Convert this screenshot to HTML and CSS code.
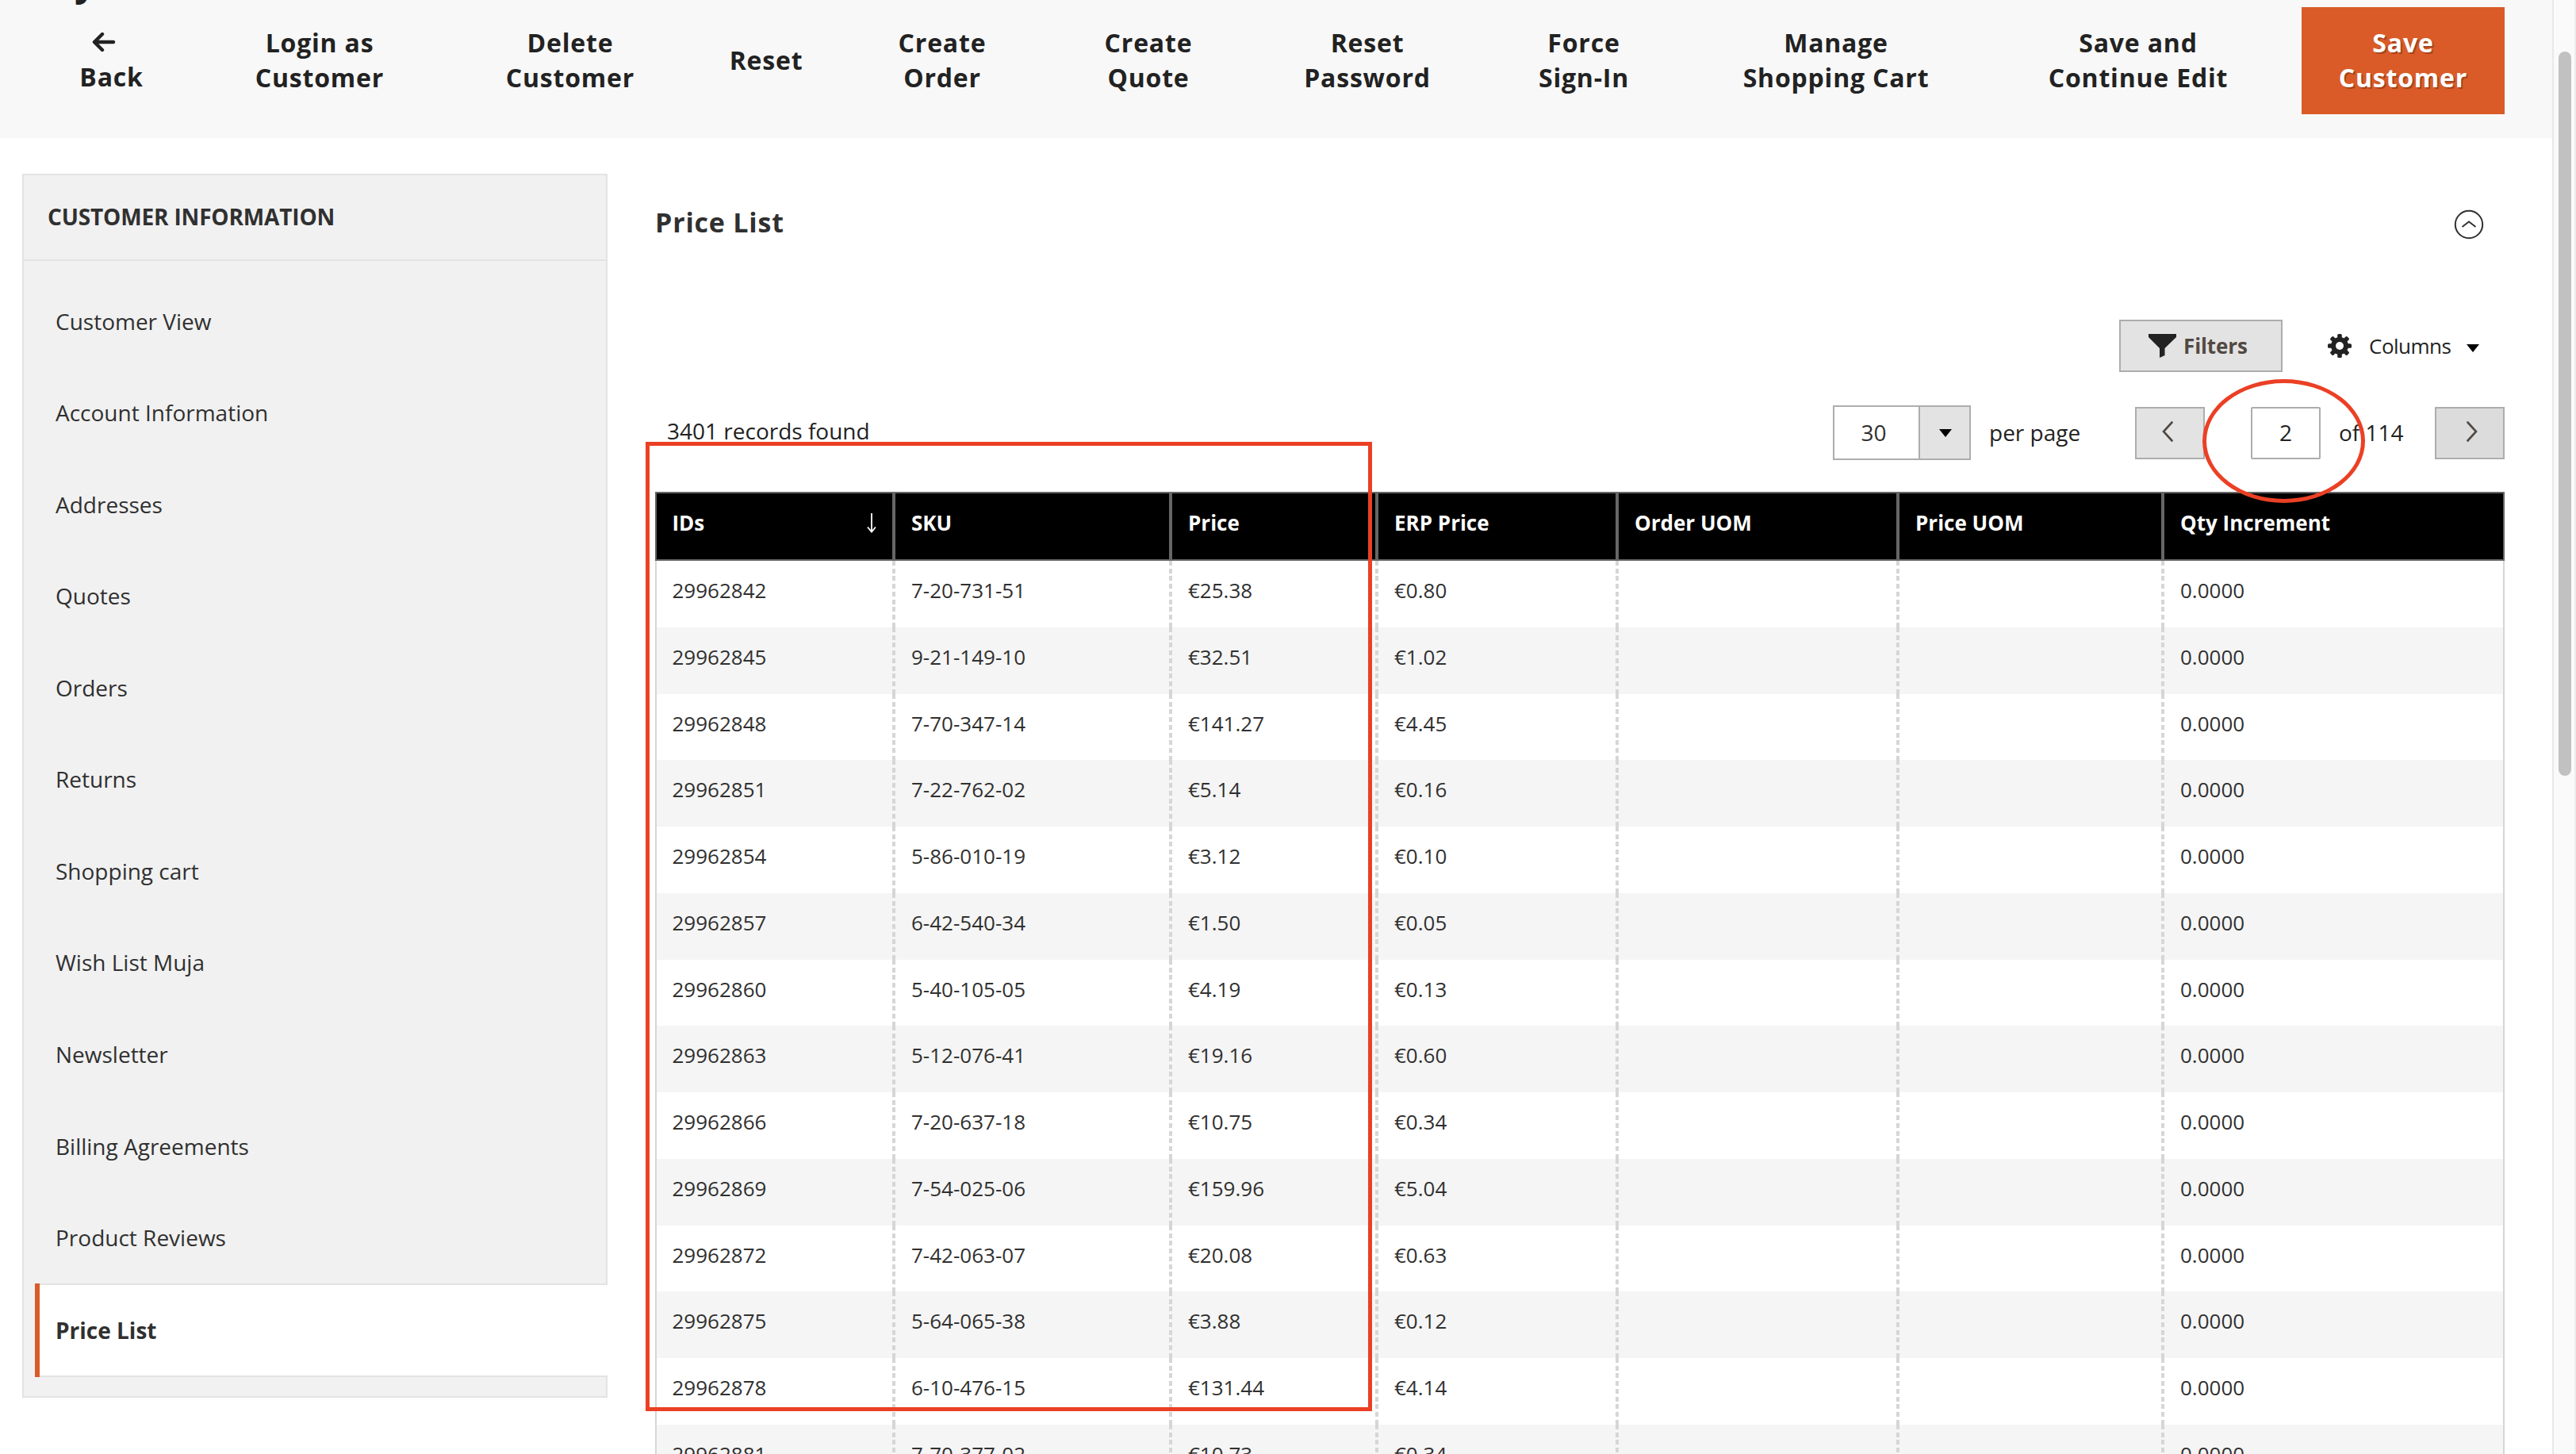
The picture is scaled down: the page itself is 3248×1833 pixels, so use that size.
FILE: index.html
```
<!DOCTYPE html>
<html lang="en">
<head>
<meta charset="utf-8">
<title>Customer price list</title>
<link rel="stylesheet" href="styles.css">
</head>
<body>
<div class="page">
<header class="actions">
<span class="page-title">y</span>
<button class="action back"><svg class="back-icon" viewBox="0 0 30 26"><path d="M13 3 L3 13 L13 23 M3 13 H27"/></svg><span>Back</span></button>
<button class="action login">Login as<br>Customer</button>
<button class="action delete">Delete<br>Customer</button>
<button class="action reset">Reset</button>
<button class="action order">Create<br>Order</button>
<button class="action quote">Create<br>Quote</button>
<button class="action password">Reset<br>Password</button>
<button class="action force">Force<br>Sign-In</button>
<button class="action cart">Manage<br>Shopping Cart</button>
<button class="action continue">Save and<br>Continue Edit</button>
<button class="action save">Save<br>Customer</button>
</header>
<div class="columns">
<nav class="sidebar">
<h2 class="sidebar-title">CUSTOMER INFORMATION</h2>
<ul class="tabs">
<li class="tab">Customer View</li>
<li class="tab">Account Information</li>
<li class="tab">Addresses</li>
<li class="tab">Quotes</li>
<li class="tab">Orders</li>
<li class="tab">Returns</li>
<li class="tab">Shopping cart</li>
<li class="tab">Wish List Muja</li>
<li class="tab">Newsletter</li>
<li class="tab">Billing Agreements</li>
<li class="tab">Product Reviews</li>
<li class="tab active">Price List</li>
</ul>
</nav>
<main class="content">
<div class="section-head"><h1 class="section-title">Price List</h1>
<svg class="collapse" viewBox="0 0 38 38"><circle cx="19" cy="19" r="17.2"/><path d="M10.5 22 L19 15.5 L27.5 22"/></svg></div>
<div class="toolbar">
<button class="filters"><svg class="funnel" viewBox="0 0 35 30"><path d="M0 0H35V4L20.5 18V27L14 30V18L0 4Z"/></svg>Filters</button>
<div class="columns-menu"><svg class="gear" viewBox="-15 -15 30 30"><g><rect x="-2.8" y="-15" width="5.6" height="30" rx="1.6"/><rect x="-2.8" y="-15" width="5.6" height="30" rx="1.6" transform="rotate(45)"/><rect x="-2.8" y="-15" width="5.6" height="30" rx="1.6" transform="rotate(90)"/><rect x="-2.8" y="-15" width="5.6" height="30" rx="1.6" transform="rotate(135)"/><circle r="11"/></g><circle class="gear-hole" r="5"/></svg><span>Columns</span><i class="caret"></i></div>
</div>
<div class="paging">
<span class="records">3401 records found</span>
<div class="page-size"><span class="size-value">30</span><span class="size-arrow"><i class="caret"></i></span></div>
<span class="per-page">per page</span>
<button class="pager prev"><svg class="chevron" viewBox="0 0 14 26"><path d="M12.5 1.5 L2 13 L12.5 24.5"/></svg></button>
<span class="page-number">2</span>
<span class="page-total">of 114</span>
<button class="pager next"><svg class="chevron" viewBox="0 0 14 26"><path d="M1.5 1.5 L12 13 L1.5 24.5"/></svg></button>
</div>
<div class="grid">
<div class="row head"><span>IDs<svg class="sort" viewBox="0 0 12 25"><path d="M6 0V23M1 17.5L6 23.5L11 17.5"/></svg></span><span>SKU</span><span>Price</span><span>ERP Price</span><span>Order UOM</span><span>Price UOM</span><span>Qty Increment</span></div>
<div class="row"><span>29962842</span><span>7-20-731-51</span><span>€25.38</span><span>€0.80</span><span></span><span></span><span>0.0000</span></div>
<div class="row"><span>29962845</span><span>9-21-149-10</span><span>€32.51</span><span>€1.02</span><span></span><span></span><span>0.0000</span></div>
<div class="row"><span>29962848</span><span>7-70-347-14</span><span>€141.27</span><span>€4.45</span><span></span><span></span><span>0.0000</span></div>
<div class="row"><span>29962851</span><span>7-22-762-02</span><span>€5.14</span><span>€0.16</span><span></span><span></span><span>0.0000</span></div>
<div class="row"><span>29962854</span><span>5-86-010-19</span><span>€3.12</span><span>€0.10</span><span></span><span></span><span>0.0000</span></div>
<div class="row"><span>29962857</span><span>6-42-540-34</span><span>€1.50</span><span>€0.05</span><span></span><span></span><span>0.0000</span></div>
<div class="row"><span>29962860</span><span>5-40-105-05</span><span>€4.19</span><span>€0.13</span><span></span><span></span><span>0.0000</span></div>
<div class="row"><span>29962863</span><span>5-12-076-41</span><span>€19.16</span><span>€0.60</span><span></span><span></span><span>0.0000</span></div>
<div class="row"><span>29962866</span><span>7-20-637-18</span><span>€10.75</span><span>€0.34</span><span></span><span></span><span>0.0000</span></div>
<div class="row"><span>29962869</span><span>7-54-025-06</span><span>€159.96</span><span>€5.04</span><span></span><span></span><span>0.0000</span></div>
<div class="row"><span>29962872</span><span>7-42-063-07</span><span>€20.08</span><span>€0.63</span><span></span><span></span><span>0.0000</span></div>
<div class="row"><span>29962875</span><span>5-64-065-38</span><span>€3.88</span><span>€0.12</span><span></span><span></span><span>0.0000</span></div>
<div class="row"><span>29962878</span><span>6-10-476-15</span><span>€131.44</span><span>€4.14</span><span></span><span></span><span>0.0000</span></div>
<div class="row"><span>29962881</span><span>7-70-377-02</span><span>€10.73</span><span>€0.34</span><span></span><span></span><span>0.0000</span></div>
</div>
</main>
</div>
</div>
<div class="scrollbar"><div class="thumb"></div></div>
<div class="mark-box"></div>
<div class="mark-oval"></div>
</body>
</html>
```

FILE: styles.css
```
* { box-sizing: border-box; }
body {
  margin: 0;
  position: relative;
  display: flex;
  width: 3248px;
  height: 1833px;
  overflow: hidden;
  background: #fff;
  font-family: "Open Sans", "Noto Sans", sans-serif;
  font-size: 28px;
  color: #303030;
}
button { font: inherit; border: 0; padding: 0; background: none; color: inherit; }
h1, h2, ul { margin: 0; padding: 0; list-style: none; }

.page { width: 3218px; height: 1833px; overflow: hidden; }

/* action bar */
.actions {
  position: relative;
  display: flex;
  height: 174px;
  padding-top: 9px;
  overflow: hidden;
  background: #f8f8f8;
}
.page-title {
  position: absolute;
  left: 94px;
  top: -62px;
  font-size: 48px;
  line-height: 76px;
  font-weight: 700;
  color: #222;
}
.action {
  flex: none;
  height: 135px;
  padding-bottom: 2px;
  font-size: 32px;
  line-height: 43.5px;
  font-weight: 700;
  letter-spacing: 0.8px;
  text-align: center;
  color: #222;
}
.back { width: 99px; margin-left: 91px; margin-right: 1px; }
.back-icon { display: block; width: 30px; height: 26px; margin: 8px 0 9px 25px; fill: none; stroke: #222; stroke-width: 4.4; stroke-linecap: round; stroke-linejoin: round; }
.login { width: 200px; margin-left: 112px; }
.delete { width: 200px; margin-left: 116px; }
.reset { width: 120px; margin-left: 87px; }
.order { width: 130px; margin-left: 97px; }
.quote { width: 130px; margin-left: 130px; }
.password { width: 180px; margin-left: 121px; }
.force { width: 140px; margin-left: 113px; }
.cart { width: 250px; margin-left: 123px; }
.continue { width: 250px; margin-left: 131px; }
.save { width: 256px; margin-left: 81px; background: #da5b27; color: #fff; text-shadow: 2px 2px 0 rgba(0, 0, 0, .25); }

.columns { display: flex; align-items: flex-start; padding: 45px 60px 0 28px; }

/* side tabs */
.sidebar { width: 738px; height: 1543px; flex: none; background: #f1f1f1; border: 2px solid #e3e3e3; }
.sidebar-title { height: 108px; border-bottom: 2px solid #e3e3e3; padding-left: 30px; font-size: 28px; line-height: 105px; font-weight: 700; letter-spacing: -0.15px; }
.tabs { padding: 18.5px 0 0 14px; margin-right: -2px; }
.tab { height: 115.57px; line-height: 115.5px; padding-left: 26px; }
.tab.active { height: 118px; margin-top: -1px; line-height: 114px; padding-left: 20px; font-weight: 700; background: linear-gradient(#e3e3e3 0 2px, #fff 2px 116px, #e3e3e3 116px); border-left: 6px solid #da5b27; padding-top: 2px; }

/* content */
.content { width: 2332px; margin-left: 60px; }
.section-head { display: flex; justify-content: space-between; height: 184px; padding: 37px 26px 0 0; }
.section-title { font-size: 34px; line-height: 48px; font-weight: 700; letter-spacing: .8px; }
.collapse { width: 38px; height: 38px; margin-top: 8px; fill: none; stroke: #303030; stroke-width: 2; }

.toolbar { display: flex; justify-content: flex-end; height: 66px; font-size: 26px; color: #222; }
.filters { display: flex; align-items: center; width: 206px; height: 66px; padding: 0 0 0 35px; background: #e3e3e3; border: 2px solid #adadad; color: #514943; font-weight: 700; letter-spacing: -0.1px; }
.funnel { width: 35px; height: 30px; margin-right: 9px; fill: #222; }
.columns-menu { display: flex; align-items: center; width: 280px; padding-left: 57px; letter-spacing: -0.5px; }
.gear { width: 30px; height: 30px; margin-right: 22px; fill: #222; }
.gear-hole { fill: #fff; }
.caret { flex: none; border: 8px solid transparent; border-top: 10px solid #000; border-bottom: 0; }
.columns-menu .caret { margin: 5px 0 0 20px; }

.paging { display: flex; height: 151px; padding-top: 42px; color: #222; line-height: 68px; }
.records { width: 1485px; padding-left: 15px; margin-top: -2px; }
.page-size { display: flex; width: 174px; height: 69px; border: 2px solid #adadad; line-height: 64px; color: #303030; }
.size-value { width: 106px; padding-right: 7px; text-align: center; }
.size-arrow { display: flex; align-items: center; justify-content: center; flex: 1; border-left: 2px solid #adadad; background: #e3e3e3; padding-left: 2px; }
.per-page { width: 207px; padding-left: 23px; }
.pager { display: flex; justify-content: center; width: 88px; height: 66px; margin-top: 2px; padding-top: 16px; border: 2px solid #adadad; background: #e3e3e3; }
.prev { padding-right: 6px; }
.next { padding-left: 6px; background: #dcdcdc; }
.chevron { width: 14px; height: 26px; fill: none; stroke: #514943; stroke-width: 2.6; stroke-linecap: round; }
.page-number { width: 88px; height: 66px; margin: 2px 0 0 58px; border: 2px solid #adadad; border-radius: 2px; line-height: 60px; text-align: center; }
.page-total { width: 144px; padding-left: 23px; }

/* data grid */
.grid { font-size: 26px; border-right: 2px solid #d6d6d6; border-left: 2px solid #d6d6d6; }
.row { display: grid; grid-template-columns: 297px 349px 260px 303px 354px 334px 431px; height: 83.77px; }
.row span { padding: 19px 0 0 24px; line-height: 36px; }
.row span:first-child { padding-left: 19.5px; }
.row:nth-child(odd) { background: #f5f5f5; }
.row span + span { background: repeating-linear-gradient(#d6d6d6 0 6px, transparent 6px 9.72px) left top / 4px 100% no-repeat; }
.row.head { height: 87px; margin: 0 -2px; background: #000; border: 2px solid #666; color: #fff; font-weight: 700; }
.row.head span { position: relative; padding-top: 19px; }
.row.head span + span { background: none; border-left: 4px solid #666; padding-left: 20px; }
.sort { position: absolute; right: 20px; top: 25px; width: 12px; height: 25px; fill: none; stroke: #fff; stroke-width: 1.8; }

.scrollbar { width: 30px; height: 1833px; padding: 65px 0 0 6px; background: #fafafa; border-left: 2px solid #e8e8e8; border-right: 2px solid #ededed; }
.thumb { width: 16px; height: 913px; border-radius: 8px; background: #c1c1c1; }

/* annotations over the page */
.mark-box { position: absolute; left: 814px; top: 557px; width: 916px; height: 1222px; border: 5px solid #eb4025; }
.mark-oval { position: absolute; left: 2777px; top: 478px; width: 205px; height: 156px; border: 5px solid #eb4025; border-radius: 50%; }
```
